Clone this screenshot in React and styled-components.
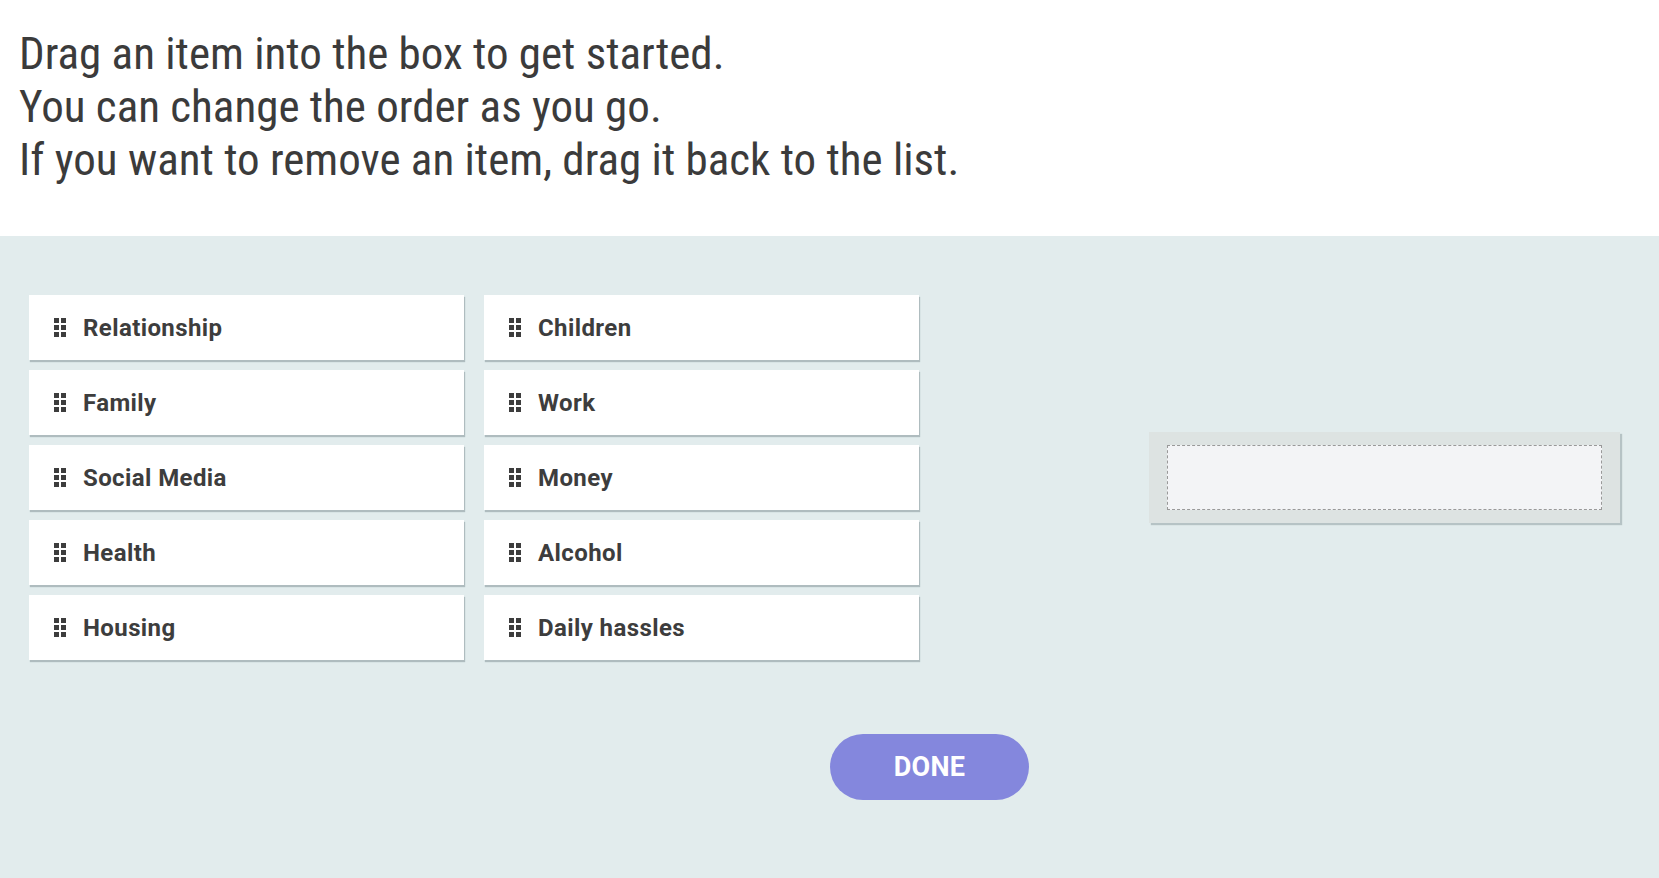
import React from 'react'
import styled, {createGlobalStyle} from 'styled-components'

const GlobalStyle = createGlobalStyle`
  html, body {
    margin: 0;
    padding: 0;
    background: #e2eced;
  }
  body {
    font-family: Roboto, "Liberation Sans", sans-serif;
    color: #3d3d3d;
  }
`

const items = [
  'Relationship', 'Children',
  'Family', 'Work',
  'Social Media', 'Money',
  'Health', 'Alcohol',
  'Housing', 'Daily hassles',
]

const Page = styled.div`
  min-height: 100vh;
  display: flex;
  flex-direction: column;
`

const Header = styled.div`
  background: #fff;
  height: 236px;
  box-sizing: border-box;
  padding: 27px 0 0 19px;
`

const Intro = styled.p`
  margin: 0;
  font-family: Roboto, "Liberation Sans", sans-serif;
  font-stretch: 75%;
  font-size: 45px;
  line-height: 53px;
  color: #3b3b3b;
`

const Board = styled.div`
  flex: 1;
  background: #e2eced;
  padding: 59px 39px 40px 29px;
`

const Row = styled.div`
  display: flex;
  align-items: center;
  justify-content: space-between;
`

const List = styled.div`
  display: grid;
  grid-template-columns: 435px 435px;
  column-gap: 20px;
  row-gap: 10px;
`

const Item = styled.div`
  height: 65px;
  background: #fff;
  box-shadow: 1px 2px 1px rgba(80, 100, 105, 0.35);
  display: flex;
  align-items: center;
  padding-left: 25px;
  box-sizing: border-box;
  cursor: grab;
  font-size: 24px;
  font-weight: 700;
  letter-spacing: 0.4px;
  color: #3d3d3d;
`

const Grip = styled.svg`
  width: 12px;
  height: 19px;
  margin-right: 17px;
  flex-shrink: 0;
`

const DropZone = styled.div`
  width: 471px;
  height: 91px;
  box-sizing: border-box;
  background: #dde3e2;
  box-shadow: 2px 2px 1px rgba(80, 100, 105, 0.3);
  padding: 13px 18px;
`

const Slot = styled.div`
  height: 100%;
  box-sizing: border-box;
  background: #f3f4f6;
  border: 1px dashed #999;
`

const Footer = styled.div`
  display: flex;
  padding-left: 801px;
  margin-top: 74px;
`

const DoneButton = styled.button`
  width: 199px;
  height: 66px;
  border: none;
  border-radius: 33px;
  background: #8487dd;
  color: #fff;
  font-family: Roboto, "Liberation Sans", sans-serif;
  font-size: 27px;
  font-weight: 700;
  letter-spacing: 0.3px;
  cursor: pointer;
`

const GripIcon = () => (
  <Grip viewBox="0 0 12 19">
    {[0, 7, 14].map(y => (
      <React.Fragment key={y}>
        <rect x="0" y={y} width="5" height="5" fill="#3d3d3d"/>
        <rect x="7" y={y} width="5" height="5" fill="#3d3d3d"/>
      </React.Fragment>
    ))}
  </Grip>
)

export default function App() {
  return (
    <Page>
      <GlobalStyle/>
      <Header>
        <Intro>
          Drag an item into the box to get started.<br/>
          You can change the order as you go.<br/>
          If you want to remove an item, drag it back to the list.
        </Intro>
      </Header>
      <Board>
        <Row>
          <List>
            {items.map(name => (
              <Item key={name}>
                <GripIcon/>
                {name}
              </Item>
            ))}
          </List>
          <DropZone>
            <Slot/>
          </DropZone>
        </Row>
        <Footer>
          <DoneButton>DONE</DoneButton>
        </Footer>
      </Board>
    </Page>
  )
}
